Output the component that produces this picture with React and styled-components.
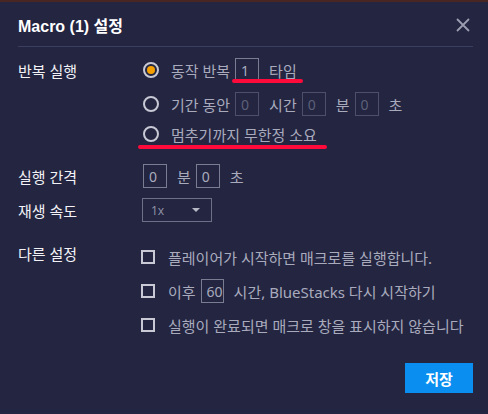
import React from 'react'
import styled, { createGlobalStyle } from 'styled-components'

const GlobalStyle = createGlobalStyle`
  html, body {
    margin: 0;
    padding: 0;
    background: #232541;
  }
  body {
    font-family: "Noto Sans", "Noto Sans CJK KR", sans-serif;
  }
`

const Dialog = styled.div`
  position: relative;
  box-sizing: border-box;
  width: 488px;
  height: 414px;
  background: #232541;
  border-top: 2px solid #4a2622;
  padding: 0 15px 0 18px;
  display: flex;
  flex-direction: column;
`

const Header = styled.div`
  display: flex;
  align-items: center;
  justify-content: space-between;
  height: 42px;
  padding-top: 2px;
  border-bottom: 1px solid #3b3e5e;
`

const Title = styled.h1`
  margin: 0;
  font-size: 16px;
  font-weight: 700;
  color: #ffffff;
  font-family: "Liberation Sans", "Noto Sans CJK KR", sans-serif;
`

const CloseButton = styled.button`
  border: 0;
  background: none;
  padding: 0;
  margin-right: 3px;
  display: flex;
  cursor: pointer;
`

const Form = styled.div`
  display: grid;
  grid-template-columns: 124px 1fr;
  margin-top: 11px;
`

const Label = styled.div`
  font-size: 15px;
  color: #f2f2f6;
  height: 24px;
  display: flex;
  align-items: center;
  margin-top: ${p => p.top || 0}px;
`

const Field = styled.div`
  display: flex;
  flex-direction: column;
  gap: ${p => p.gap || 0}px;
  margin-top: ${p => p.top || 0}px;
`

const Row = styled.div`
  position: relative;
  display: flex;
  align-items: center;
  height: ${p => p.h || 24}px;
  margin-top: ${p => p.top || 0}px;
  font-size: 15px;
  color: #a9abbd;
  white-space: nowrap;
`

const Radio = styled.span`
  box-sizing: border-box;
  width: 16px;
  height: 16px;
  border-radius: 50%;
  border: 2px solid #c8c9d4;
  margin: 0 12px 0 1px;
  display: flex;
  align-items: center;
  justify-content: center;
  &::after {
    content: '';
    display: ${p => (p.checked ? 'block' : 'none')};
    width: 8px;
    height: 8px;
    border-radius: 50%;
    background: #f5a000;
  }
`

const Box = styled.span`
  box-sizing: border-box;
  width: ${p => p.w || 24}px;
  height: 24px;
  margin: 0 10px 0 ${p => (p.first ? 1 : 5)}px;
  border: 1px solid ${p => (p.dim ? '#4d5068' : '#7a7c92')};
  color: ${p => (p.dim ? '#5d6078' : '#a9abbd')};
  font-size: 14px;
  display: flex;
  align-items: center;
  padding-left: 5px;
`

const Select = styled.span`
  box-sizing: border-box;
  width: 70px;
  height: 24px;
  border: 1px solid #6e7088;
  color: #8d8fa4;
  font-size: 12px;
  display: flex;
  align-items: center;
  justify-content: space-between;
  padding: 0 11px 0 8px;
  &::after {
    content: '';
    border-left: 4px solid transparent;
    border-right: 4px solid transparent;
    border-top: 4px solid #b8b9c6;
  }
`

const Check = styled.span`
  box-sizing: border-box;
  width: 14px;
  height: 14px;
  border: 2px solid #c8c9d4;
  margin: 0 13px 0 -1px;
`

const Mark = styled.span`
  position: absolute;
  left: ${p => p.left}px;
  top: ${p => p.top}px;
  width: ${p => p.w}px;
  height: 4px;
  border-radius: 2px;
  background: #ff0a3a;
`

const Footer = styled.div`
  display: flex;
  justify-content: flex-end;
  margin-top: auto;
  margin-bottom: 21px;
`

const SaveButton = styled.button`
  width: 68px;
  height: 30px;
  border: 0;
  background: #0a8ff0;
  color: #ffffff;
  font-size: 15px;
  font-weight: 700;
  font-family: "Noto Sans CJK KR", sans-serif;
  cursor: pointer;
`

export default function App() {
  return (
    <>
      <GlobalStyle />
      <Dialog>
        <Header>
          <Title>Macro (1) 설정</Title>
          <CloseButton aria-label="닫기">
            <svg width="14" height="14" viewBox="0 0 14 14">
              <path d="M1 1L13 13M13 1L1 13" stroke="#9c9db0" strokeWidth="1.8" />
            </svg>
          </CloseButton>
        </Header>

        <Form>
          <Label>반복 실행</Label>
          <Field>
            <Row>
              <Radio checked />
              동작 반복
              <Box>1</Box>
              타임
              <Mark left={90} top={21} w={71} />
            </Row>
            <Row top={10}>
              <Radio />
              기간 동안
              <Box dim>0</Box>
              시간
              <Box dim>0</Box>
              분
              <Box dim>0</Box>
              초
            </Row>
            <Row h={20} top={8}>
              <Radio />
              멈추기까지 무한정 소요
              <Mark left={-4} top={21} w={189} />
            </Row>
          </Field>

          <Label top={20}>실행 간격</Label>
          <Field top={20}>
            <Row>
              <Box first>0</Box>
              분
              <Box>0</Box>
              초
            </Row>
          </Field>

          <Label top={10}>재생 속도</Label>
          <Field top={10}>
            <Row>
              <Select>1x</Select>
            </Row>
          </Field>

          <Label top={19}>다른 설정</Label>
          <Field top={23} gap={10}>
            <Row>
              <Check />
              플레이어가 시작하면 매크로를 실행합니다.
            </Row>
            <Row>
              <Check />
              이후
              <Box w={23}>60</Box>
              시간, BlueStacks 다시 시작하기
            </Row>
            <Row>
              <Check />
              실행이 완료되면 매크로 창을 표시하지 않습니다
            </Row>
          </Field>
        </Form>

        <Footer>
          <SaveButton>저장</SaveButton>
        </Footer>
      </Dialog>
    </>
  )
}
